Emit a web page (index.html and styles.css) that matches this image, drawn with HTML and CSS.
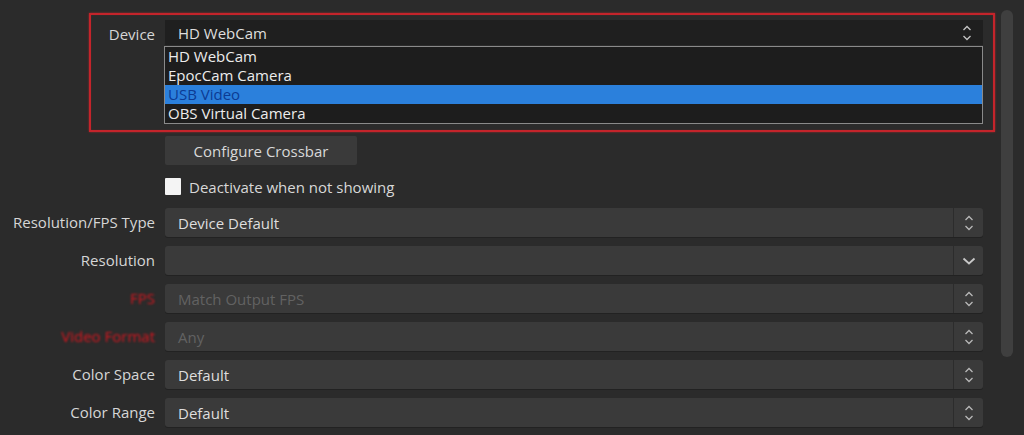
FILE: index.html
```html
<!DOCTYPE html>
<html lang="en">
<head>
<meta charset="utf-8">
<title>Video Capture Device Properties</title>
<link rel="stylesheet" href="styles.css">
</head>
<body>
<div class="window">
  <div class="content">
    <div class="device-group">
      <span class="label dev-label">Device</span>
      <div class="field-col">
        <div class="combo combo-dark">
          <span class="value">HD WebCam</span>
          <svg class="spin" width="10" height="20" viewBox="0 0 10 20"><path d="M1.5 7 L5 3.5 L8.5 7 M1.5 13 L5 16.5 L8.5 13" fill="none" stroke="#c4c4c4" stroke-width="1.3"/></svg>
        </div>
        <ul class="list">
          <li>HD WebCam</li>
          <li>EpocCam Camera</li>
          <li class="sel">USB Video</li>
          <li>OBS Virtual Camera</li>
        </ul>
      </div>
    </div>

    <div class="row row-btn">
      <span class="label"></span>
      <button class="btn">Configure Crossbar</button>
    </div>

    <div class="row row-check">
      <span class="label"></span>
      <label class="check"><span class="box"></span>Deactivate when not showing</label>
    </div>

    <div class="row">
      <span class="label">Resolution/FPS Type</span>
      <div class="combo"><span class="value">Device Default</span><span class="btnpart"><svg width="10" height="20" viewBox="0 0 10 20"><path d="M1.5 7 L5 3.5 L8.5 7 M1.5 13 L5 16.5 L8.5 13" fill="none" stroke="#b8b8b8" stroke-width="1.3"/></svg></span></div>
    </div>
    <div class="row">
      <span class="label">Resolution</span>
      <div class="combo"><span class="value"></span><span class="btnpart"><svg width="14" height="20" viewBox="0 0 14 20"><path d="M1.5 7.5 L7 12.5 L12.5 7.5" fill="none" stroke="#c8c8c8" stroke-width="1.8"/></svg></span></div>
    </div>
    <div class="row">
      <span class="label warn">FPS</span>
      <div class="combo"><span class="value dis">Match Output FPS</span><span class="btnpart"><svg width="10" height="20" viewBox="0 0 10 20"><path d="M1.5 7 L5 3.5 L8.5 7 M1.5 13 L5 16.5 L8.5 13" fill="none" stroke="#b8b8b8" stroke-width="1.3"/></svg></span></div>
    </div>
    <div class="row">
      <span class="label warn">Video Format</span>
      <div class="combo"><span class="value dis">Any</span><span class="btnpart"><svg width="10" height="20" viewBox="0 0 10 20"><path d="M1.5 7 L5 3.5 L8.5 7 M1.5 13 L5 16.5 L8.5 13" fill="none" stroke="#b8b8b8" stroke-width="1.3"/></svg></span></div>
    </div>
    <div class="row">
      <span class="label">Color Space</span>
      <div class="combo"><span class="value">Default</span><span class="btnpart"><svg width="10" height="20" viewBox="0 0 10 20"><path d="M1.5 7 L5 3.5 L8.5 7 M1.5 13 L5 16.5 L8.5 13" fill="none" stroke="#b8b8b8" stroke-width="1.3"/></svg></span></div>
    </div>
    <div class="row">
      <span class="label">Color Range</span>
      <div class="combo"><span class="value">Default</span><span class="btnpart"><svg width="10" height="20" viewBox="0 0 10 20"><path d="M1.5 7 L5 3.5 L8.5 7 M1.5 13 L5 16.5 L8.5 13" fill="none" stroke="#b8b8b8" stroke-width="1.3"/></svg></span></div>
    </div>
  </div>
  <div class="scrollbar"><div class="thumb"></div></div>
</div>
</body>
</html>
```

FILE: styles.css
```css
* { box-sizing: border-box; }
html, body { margin: 0; padding: 0; }
body {
  background: #2b2b2b;
  font-family: "Open Sans", "Noto Sans", sans-serif;
  font-size: 15px;
  color: #dcdcdc;
  width: 1024px;
  height: 435px;
  overflow: hidden;
}
.window {
  display: flex;
  height: 435px;
}
.content {
  width: 995px;
  padding-top: 13px;
  display: flex;
  flex-direction: column;
}
.device-group {
  margin-left: 89px;
  width: 906px;
  border: 2px solid #c4242b;
  box-shadow: 0 0 2px rgba(210, 40, 40, 0.7), inset 0 0 1px rgba(210, 40, 40, 0.6);
  padding: 5px 0 6px 0;
  display: grid;
  grid-template-columns: 64px 818px;
  column-gap: 10px;
  align-items: start;
}
.label {
  text-align: right;
  white-space: nowrap;
  color: #d6d6d6;
  line-height: 29px;
}
.dev-label { line-height: 28px; }
.field-col { display: flex; flex-direction: column; }
.combo {
  height: 29px;
  background: #3a3a3a;
  border-radius: 3px;
  display: flex;
  align-items: center;
  box-shadow: 0 1px 0 #222;
}
.combo .value {
  flex: 1;
  padding-left: 13px;
  color: #dedede;
}
.combo .value.dis { color: #626262; }
.combo-dark {
  height: 25px;
  background: #1f1f1f;
  border-radius: 0;
  box-shadow: none;
  padding-right: 11px;
}
.btnpart {
  width: 30px;
  height: 29px;
  border-left: 1px solid #2c2c2c;
  display: flex;
  align-items: center;
  justify-content: center;
}
.list {
  list-style: none;
  margin: 1px 0 0 -1px;
  padding: 0;
  background: #1d1d1d;
  border: 1px solid #8a8a8a;
  width: 819px;
}
.list li {
  height: 19px;
  line-height: 19px;
  padding-left: 3px;
  color: #ececec;
}
.list li.sel {
  background: #2b80dc;
  color: #0c3b94;
}
.row {
  display: grid;
  grid-template-columns: 155px 818px;
  column-gap: 10px;
  margin-bottom: 9px;
}
.row-btn { margin-top: 4px; margin-bottom: 13px; }
.row-check { margin-bottom: 13px; }
.btn {
  width: 192px;
  height: 29px;
  background: #3a3a3a;
  border: none;
  border-radius: 2px;
  color: #d8d8d8;
  font: inherit;
  padding: 0;
}
.check {
  display: flex;
  align-items: center;
  gap: 8px;
  height: 17px;
  color: #d8d8d8;
}
.check .box {
  width: 16px;
  height: 17px;
  background: #f4f4f4;
  border-radius: 1px;
}
.warn {
  color: #d4161f;
  filter: blur(1.1px);
}
.scrollbar {
  flex: 1;
  padding: 10px 0 0 6px;
}
.thumb {
  width: 12px;
  height: 347px;
  background: #3f3f3f;
  border-radius: 6px;
}
```
